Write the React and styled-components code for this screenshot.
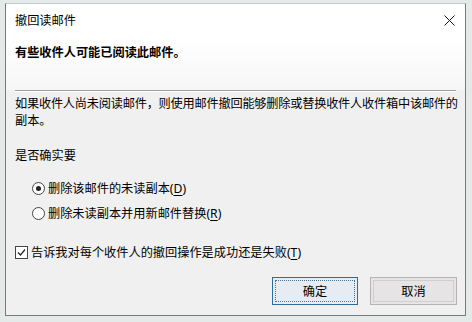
import styled, { createGlobalStyle } from "styled-components";

const GlobalStyle = createGlobalStyle`
  html, body {
    margin: 0;
    padding: 0;
    background: #e4eae7;
  }
  body {
    width: 472px;
    height: 322px;
    overflow: hidden;
    font-family: "Noto Sans", "Noto Sans CJK SC", sans-serif;
    color: #000;
  }
`;

const Window = styled.div`
  margin: 3px 0 0 5px;
  width: 461px;
  height: 313px;
  box-sizing: border-box;
  border: 1px solid #7a7a7a;
  border-top-color: #c4c8dc;
  display: flex;
  flex-direction: column;
  background: #f0f0f0;
`;

const TitleBar = styled.div`
  height: 32px;
  flex-shrink: 0;
  display: flex;
  align-items: center;
  justify-content: space-between;
  padding: 0 10px 0 9px;
  background: #fff;
`;

const Title = styled.span`
  font-size: 12.2px;
  line-height: 17px;
`;

const Close = styled.svg`
  width: 11px;
  height: 11px;
`;

const Header = styled.div`
  height: 54px;
  box-sizing: border-box;
  padding: 8px 9px 0;
  background: linear-gradient(#ffffff, #f6f6f6);
`;

const Strong = styled.div`
  font-size: 12.2px;
  line-height: 17px;
  font-weight: bold;
`;

const Separator = styled.div`
  height: 0;
  margin: 0 9px;
  border-top: 1px solid #a0a0a0;
  border-bottom: 1px solid #ffffff;
`;

const Body = styled.div`
  flex: 1;
  display: flex;
  flex-direction: column;
  padding: 3px 8px 0 9px;
  font-size: 12.2px;
  line-height: 17px;
`;

const Line = styled.div`
  margin-top: ${(p) => p.gap || 0}px;
  white-space: nowrap;
  letter-spacing: ${(p) => (p.tight ? "-0.22px" : "0")};
`;

const Options = styled.div`
  display: flex;
  flex-direction: column;
  gap: 8px;
  margin-top: 16px;
  padding-left: 17px;
`;

const Option = styled.label`
  display: flex;
  align-items: center;
  height: 17px;
  gap: 3px;
  white-space: nowrap;
`;

const Radio = styled.span`
  width: 11px;
  height: 11px;
  border-radius: 50%;
  border: 1px solid #444;
  background: #fff;
  display: flex;
  align-items: center;
  justify-content: center;
  &::after {
    content: "";
    width: 5px;
    height: 5px;
    border-radius: 50%;
    background: ${(p) => (p.checked ? "#222" : "transparent")};
  }
`;

const Check = styled.span`
  width: 11px;
  height: 11px;
  border: 1px solid #444;
  background: #fff;
  display: flex;
  align-items: center;
  justify-content: center;
`;

const CheckRow = styled(Option)`
  margin-top: 22px;
`;

const Key = styled.u`
  text-underline-offset: 2px;
`;

const Buttons = styled.div`
  display: flex;
  justify-content: flex-end;
  gap: 12px;
  margin-top: 16px;
`;

const Button = styled.button`
  width: ${(p) => (p.primary ? 86 : 87)}px;
  height: 28px;
  font-family: inherit;
  font-size: 12.2px;
  color: #000;
  background: ${(p) => (p.primary ? "#e6ecf1" : "#e7e4e6")};
  border: 1px solid ${(p) => (p.primary ? "#2f6c9e" : "#b4b4b4")};
  outline: 1px ${(p) => (p.primary ? "dotted #4a6f8c" : "solid #cfcfcf")};
  outline-offset: -4px;
  padding: 0;
`;

export default function App() {
  return (
    <>
      <GlobalStyle />
      <Window>
        <TitleBar>
          <Title>撤回读邮件</Title>
          <Close viewBox="0 0 11 11">
            <path d="M0.5 0.5 L10.5 10.5 M10.5 0.5 L0.5 10.5" stroke="#111" strokeWidth="1" fill="none" />
          </Close>
        </TitleBar>
        <Header>
          <Strong>有些收件人可能已阅读此邮件。</Strong>
        </Header>
        <Separator />
        <Body>
          <Line tight>如果收件人尚未阅读邮件，则使用邮件撤回能够删除或替换收件人收件箱中该邮件的</Line>
          <Line>副本。</Line>
          <Line gap={18}>是否确实要</Line>
          <Options>
            <Option>
              <Radio checked />
              <span>
                删除该邮件的未读副本(<Key>D</Key>)
              </span>
            </Option>
            <Option>
              <Radio />
              <span>
                删除未读副本并用新邮件替换(<Key>R</Key>)
              </span>
            </Option>
          </Options>
          <CheckRow>
            <Check>
              <svg width="9" height="9" viewBox="0 0 9 9">
                <path d="M1 4.5 L3.5 7 L8 1.5" stroke="#222" strokeWidth="1.2" fill="none" />
              </svg>
            </Check>
            <span>
              告诉我对每个收件人的撤回操作是成功还是失败(<Key>T</Key>)
            </span>
          </CheckRow>
          <Buttons>
            <Button primary>确定</Button>
            <Button>取消</Button>
          </Buttons>
        </Body>
      </Window>
    </>
  );
}
